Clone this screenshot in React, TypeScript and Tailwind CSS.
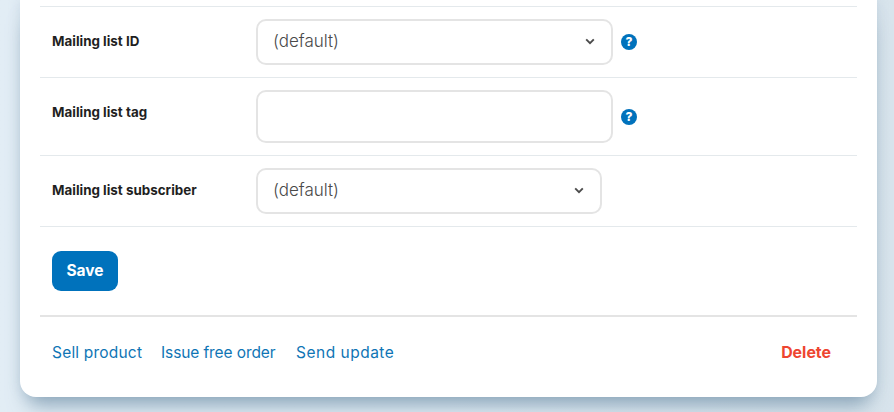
const font = "font-['Inter','Liberation_Sans',sans-serif]";

function Chevron() {
  return (
    <svg width="10" height="7" viewBox="0 0 10 7" fill="none" className="pointer-events-none mb-[2px]">
      <path d="M1.2 1.4 5 5.2l3.8-3.8" stroke="#4b4b4b" strokeWidth="1.9" />
    </svg>
  );
}

function Help() {
  return (
    <span className="flex h-4 w-4 shrink-0 items-center justify-center rounded-full bg-[#0072bc] text-[12px] font-extrabold leading-none text-white">
      ?
    </span>
  );
}

function Select({ width }: { width: string }) {
  return (
    <div className={`flex h-[46px] items-center justify-between rounded-[10px] border-2 border-[#e4e4e4] bg-white pl-[15px] pr-[16px] ${width}`}>
      <span className="text-[17px] font-light text-[#4a4a4a]">(default)</span>
      <Chevron />
    </div>
  );
}

function Row({ label, height, children }: { label: string; height: string; children: React.ReactNode }) {
  return (
    <div className={`flex border-b border-[#e4e9ec] ${height}`}>
      <div className="w-[216px] shrink-0 pl-[12px] pt-[26px] text-[13.4px] font-bold leading-[16px] text-[#1f1f1f]">
        {label}
      </div>
      {children}
    </div>
  );
}

export default function App() {
  return (
    <div className={`flex h-[412px] w-[894px] overflow-hidden bg-gradient-to-r from-[#e2edf5] via-[#e2edf5] to-[#d8e4ec] pb-[15px] pl-[20px] pr-[17px] ${font}`}>
      <div className="flex w-full flex-col rounded-b-[16px] bg-white px-[20px] pt-[6px] shadow-[0_16px_20px_-8px_rgba(120,150,172,0.8),0_0_12px_rgba(130,160,182,0.25)]">
        <div className="border-t border-[#e4e9ec]" />
        <Row label="Mailing list ID" height="h-[71px]">
          <div className="flex items-start gap-[8px] pt-[12px]">
            <Select width="w-[357px]" />
            <div className="pt-[15px]"><Help /></div>
          </div>
        </Row>
        <Row label="Mailing list tag" height="h-[78px]">
          <div className="flex items-start gap-[8px] pt-[12px]">
            <div className="h-[53px] w-[357px] rounded-[10px] border-2 border-[#e4e4e4] bg-white" />
            <div className="pt-[19px]"><Help /></div>
          </div>
        </Row>
        <Row label="Mailing list subscriber" height="h-[71px]">
          <div className="pt-[12px]">
            <Select width="w-[346px]" />
          </div>
        </Row>
        <div className="h-[90px] border-b-2 border-[#e4e4e4] pl-[12px] pt-[24px]">
          <button className="h-[40px] w-[66px] rounded-[9px] bg-[#0072bc] text-[15.5px] font-bold text-white">Save</button>
        </div>
        <div className="flex flex-1 items-start justify-between pl-[12px] pr-[26px] pt-[26px] text-[15.5px] leading-[20px]">
          <div className="flex text-[#0f75b5]">
            <a className="w-[109px] tracking-[0.2px]">Sell product</a>
            <a className="w-[135px] tracking-[-0.1px]">Issue free order</a>
            <a className="tracking-[0.5px]">Send update</a>
          </div>
          <a className="text-[15.9px] font-bold text-[#ee4530]">Delete</a>
        </div>
      </div>
    </div>
  );
}
